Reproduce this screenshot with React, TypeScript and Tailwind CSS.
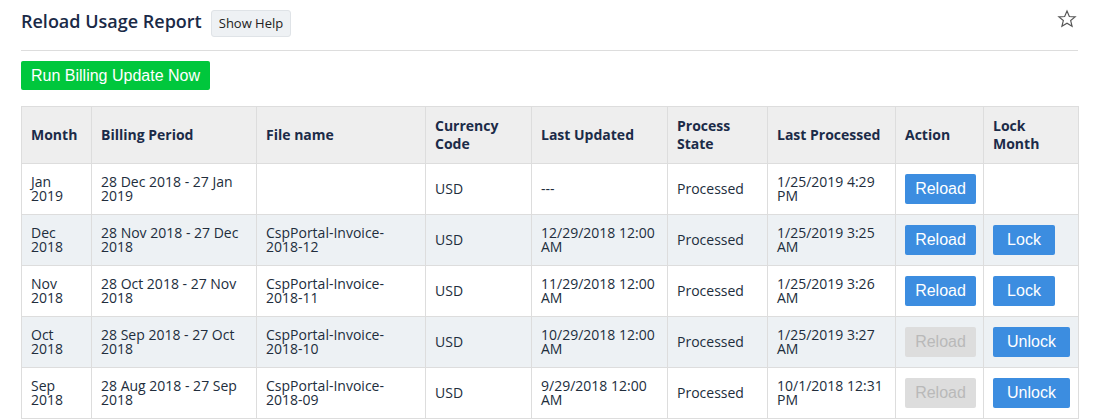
import React from 'react';

type Row = {
  month: string;
  period: string;
  file: string;
  currency: string;
  updated: string;
  state: string;
  processed: string;
  reloadEnabled: boolean;
  lock: '' | 'Lock' | 'Unlock';
};

const rows: Row[] = [
  { month: 'Jan 2019', period: '28 Dec 2018 - 27 Jan 2019', file: '', currency: 'USD', updated: '---', state: 'Processed', processed: '1/25/2019 4:29 PM', reloadEnabled: true, lock: '' },
  { month: 'Dec 2018', period: '28 Nov 2018 - 27 Dec 2018', file: 'CspPortal-Invoice-2018-12', currency: 'USD', updated: '12/29/2018 12:00 AM', state: 'Processed', processed: '1/25/2019 3:25 AM', reloadEnabled: true, lock: 'Lock' },
  { month: 'Nov 2018', period: '28 Oct 2018 - 27 Nov 2018', file: 'CspPortal-Invoice-2018-11', currency: 'USD', updated: '11/29/2018 12:00 AM', state: 'Processed', processed: '1/25/2019 3:26 AM', reloadEnabled: true, lock: 'Lock' },
  { month: 'Oct 2018', period: '28 Sep 2018 - 27 Oct 2018', file: 'CspPortal-Invoice-2018-10', currency: 'USD', updated: '10/29/2018 12:00 AM', state: 'Processed', processed: '1/25/2019 3:27 AM', reloadEnabled: false, lock: 'Unlock' },
  { month: 'Sep 2018', period: '28 Aug 2018 - 27 Sep 2018', file: 'CspPortal-Invoice-2018-09', currency: 'USD', updated: '9/29/2018 12:00 AM', state: 'Processed', processed: '10/1/2018 12:31 PM', reloadEnabled: false, lock: 'Unlock' },
];

const headers = ['Month', 'Billing Period', 'File name', 'Currency Code', 'Last Updated', 'Process State', 'Last Processed', 'Action', 'Lock Month'];

function StarIcon() {
  return (
    <svg width="20" height="20" viewBox="0 0 24 24" fill="none" stroke="#555" strokeWidth="1.4" strokeLinejoin="miter">
      <polygon points="12,2.5 14.8,9 21.8,9.4 16.4,13.9 18.1,20.8 12,17 5.9,20.8 7.6,13.9 2.2,9.4 9.2,9" />
    </svg>
  );
}

export default function App() {
  return (
    <div className="min-h-screen bg-white px-[21px] pt-[9px] text-[#212d3c]" style={{ fontFamily: '"Open Sans", "Noto Sans", sans-serif' }}>
      <div className="flex items-start h-[31px]">
        <h1 className="text-[18px] font-semibold leading-[24px] text-[#1a2a47] mt-0">Reload Usage Report</h1>
        <button className="ml-[9px] mt-[1px] h-[27px] px-[7px] rounded-[3px] border border-[#dfe3e7] bg-[#eef1f4] text-[13px] text-[#222] leading-none">
          Show Help
        </button>
        <div className="ml-auto mr-[1px] mt-0">
          <StarIcon />
        </div>
      </div>
      <div className="mt-[10px] h-px bg-[#dddddd]" />
      <button
        className="mt-[10px] h-[29px] px-[10px] rounded-[2px] bg-[#00c73c] text-white text-[16px] leading-none"
        style={{ fontFamily: '"Liberation Sans", Arial, sans-serif' }}
      >
        Run Billing Update Now
      </button>
      <table className="mt-[16px] w-[1057px] table-fixed border-collapse border border-[#dddddd] text-[14px]">
        <colgroup>
          <col className="w-[70px]" />
          <col className="w-[165px]" />
          <col className="w-[169px]" />
          <col className="w-[106px]" />
          <col className="w-[136px]" />
          <col className="w-[100px]" />
          <col className="w-[128px]" />
          <col className="w-[88px]" />
          <col className="w-[95px]" />
        </colgroup>
        <thead>
          <tr className="h-[57px] bg-[#eeeeee]">
            {headers.map((h) => (
              <th key={h} className="border border-[#dddddd] px-[9px] text-left align-middle font-bold leading-[18px] text-[#1b2b48]">
                {h}
              </th>
            ))}
          </tr>
        </thead>
        <tbody>
          {rows.map((r, i) => (
            <tr key={r.month} className={`h-[51px] ${i % 2 === 1 ? 'bg-[#edf1f4]' : 'bg-white'}`}>
              <td className="border border-[#dddddd] px-[9px] align-middle leading-[14px]">{r.month}</td>
              <td className="border border-[#dddddd] px-[9px] align-middle leading-[14px]">{r.period}</td>
              <td className="border border-[#dddddd] px-[9px] align-middle leading-[14px]">{r.file}</td>
              <td className="border border-[#dddddd] px-[9px] align-middle leading-[14px]">{r.currency}</td>
              <td className="border border-[#dddddd] px-[9px] align-middle leading-[14px]">{r.updated}</td>
              <td className="border border-[#dddddd] px-[9px] align-middle leading-[14px]">{r.state}</td>
              <td className="border border-[#dddddd] px-[9px] align-middle leading-[14px]">{r.processed}</td>
              <td className="border border-[#dddddd] px-[9px] align-middle">
                <button
                  className={`h-[30px] w-[71px] rounded-[2px] text-[16px] leading-none ${r.reloadEnabled ? 'bg-[#3c8de0] text-white' : 'bg-[#dddddd] text-[#b9b9b9]'}`}
                  style={{ fontFamily: '"Liberation Sans", Arial, sans-serif' }}
                >
                  Reload
                </button>
              </td>
              <td className="border border-[#dddddd] px-[9px] align-middle">
                {r.lock && (
                  <button
                    className={`h-[30px] rounded-[2px] bg-[#3c8de0] text-white text-[16px] leading-none ${r.lock === 'Lock' ? 'w-[62px]' : 'w-[77px]'}`}
                    style={{ fontFamily: '"Liberation Sans", Arial, sans-serif' }}
                  >
                    {r.lock}
                  </button>
                )}
              </td>
            </tr>
          ))}
        </tbody>
      </table>
    </div>
  );
}
